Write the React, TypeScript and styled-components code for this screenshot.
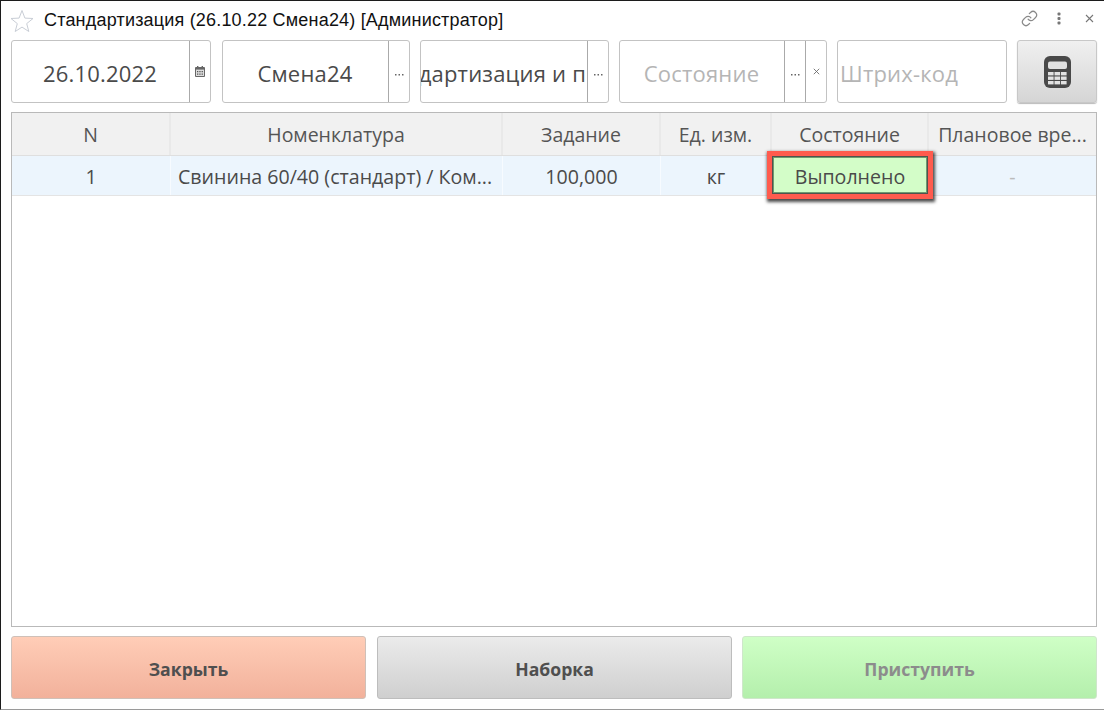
import React from "react";
import styled, { createGlobalStyle } from "styled-components";

const Global = createGlobalStyle`
  html, body { margin: 0; padding: 0; background: #fff; }
  * { box-sizing: border-box; }
`;

const Window = styled.div`
  width: 1104px;
  height: 710px;
  display: flex;
  flex-direction: column;
  background: #fff;
  border-top: 1px solid #1c1c1c;
  border-left: 1px solid #1c1c1c;
  border-bottom: 1px solid #9a9a9a;
  font-family: "Open Sans", sans-serif;
  color: #4a4a4a;
  overflow: hidden;
`;

const TitleBar = styled.div`
  height: 39px;
  flex: none;
  display: flex;
  align-items: center;
  padding: 0 0 0 9px;
`;

const Title = styled.div`
  flex: 1;
  margin-left: 10px;
  font: 18px "Liberation Sans", sans-serif;
  letter-spacing: 0.19px;
  color: #111;
  white-space: nowrap;
`;

const TitleIcons = styled.div`
  display: flex;
  align-items: center;
  margin-bottom: 4px;
`;

const IconSlot = styled.div`
  width: 30px;
  display: flex;
  align-items: center;
  justify-content: center;
`;

const Toolbar = styled.div`
  display: flex;
  flex: none;
  height: 63px;
  margin-left: 10px;
`;

const Field = styled.div<{ $w: number; $gap: number }>`
  width: ${(p) => p.$w}px;
  margin-right: ${(p) => p.$gap}px;
  flex: none;
  display: flex;
  border: 1px solid #c3c3c3;
  border-radius: 3px;
  background: #fff;
`;

const FieldValue = styled.div<{ $muted?: boolean; $align?: string }>`
  flex: 1;
  min-width: 0;
  display: flex;
  align-items: center;
  justify-content: ${(p) => p.$align || "center"};
  overflow: hidden;
  white-space: nowrap;
  padding: 2px ${(p) => (p.$align === "flex-start" ? 0 : 1)}px 0 ${(p) => (p.$align === "flex-start" ? 2 : 0)}px;
  font-size: 22px;
  letter-spacing: 0.2px;
  color: ${(p) => (p.$muted ? "#b5b5b5" : "#4a4a4a")};
`;

const FieldButton = styled.div<{ $w: number; $low?: boolean }>`
  width: ${(p) => p.$w}px;
  flex: none;
  display: flex;
  align-items: center;
  justify-content: center;
  padding-top: ${(p) => (p.$low ? 6 : 0)}px;
  border-left: 1px solid #aaa;
  color: #555;
  font-size: 11px;
`;

const IconButton = styled.div`
  width: 80px;
  flex: none;
  display: flex;
  align-items: center;
  justify-content: center;
  border: 1px solid #c8c8c8;
  border-radius: 3px;
  background: linear-gradient(#f0f0f0, #d5d5d5);
  box-shadow: 0 1px 1px #bbb;
`;

const Table = styled.div`
  flex: 1;
  margin: 9px 7px 9px 10px;
  border: 1px solid #b9b9b9;
  min-height: 0;
`;

const Row = styled.div<{ $h: number; $bg: string; $line: string }>`
  display: grid;
  grid-template-columns: 159px 332px 158px 111px 157px 1fr;
  height: ${(p) => p.$h}px;
  background: ${(p) => p.$bg};
  border-bottom: 1px solid ${(p) => p.$line};
`;

const HeadCell = styled.div`
  display: flex;
  align-items: center;
  justify-content: center;
  padding: 0 7px;
  font-size: 19.5px;
  color: #555;
  white-space: nowrap;
  overflow: hidden;
  border-right: 2px solid #e9e9e9;
  &:last-child { border-right: 0; }
`;

const Cell = styled.div<{ $left?: boolean; $muted?: boolean }>`
  position: relative;
  display: flex;
  align-items: center;
  justify-content: ${(p) => (p.$left ? "flex-start" : "center")};
  padding: 1px 7px 0;
  font-size: 19.6px;
  color: ${(p) => (p.$muted ? "#bbb" : "#4a4a4a")};
  white-space: nowrap;
  border-right: 1px solid #f7fbff;
  &:last-child { border-right: 0; }
`;

const StatusCell = styled(Cell)`
  background: #d3fdc8;
  overflow: visible;
`;

const Highlight = styled.div`
  position: absolute;
  left: -5px;
  right: -5px;
  top: -5px;
  bottom: -4px;
  border: 5px solid #ff5b4e;
  box-shadow: inset 0 0 0 1px #4e544e, inset 0 0 0 2px #6f9a70, 1px 2px 3px 1px rgba(30, 30, 30, 0.8);
  pointer-events: none;
`;

const Footer = styled.div`
  display: flex;
  flex: none;
  gap: 10px;
  height: 63px;
  margin: 0 7px 10px 10px;
`;

const ActionButton = styled.div<{ $from: string; $to: string; $line: string; $color: string; $shift?: boolean }>`
  flex: 1;
  display: flex;
  align-items: center;
  justify-content: center;
  margin-left: ${(p) => (p.$shift ? 1 : 0)}px;
  padding-top: 2px;
  font-size: 17.6px;
  font-weight: 700;
  color: ${(p) => p.$color};
  background: linear-gradient(${(p) => p.$from} 0%, ${(p) => p.$to} 100%);
  border: 1px solid ${(p) => p.$line};
  border-radius: 3px;
`;

const Star = () => (
  <svg width="24" height="24" viewBox="0 0 24 24" fill="#fff" stroke="#c9ced6" strokeWidth="1" strokeLinejoin="miter">
    <path d="M12 1.5l2.9 7.6 8.1.4-6.3 5.1 2.1 7.9L12 18.1l-6.8 4.4 2.1-7.9L1 9.5l8.1-.4z" />
  </svg>
);

const LinkIcon = () => (
  <svg width="17" height="17" viewBox="0 0 24 24" fill="none" stroke="#8a8a8a" strokeWidth="1.7" strokeLinecap="round" strokeLinejoin="round">
    <path d="M10 13a5 5 0 0 0 7.54.54l3-3a5 5 0 0 0-7.07-7.07l-1.72 1.71" />
    <path d="M14 11a5 5 0 0 0-7.54-.54l-3 3a5 5 0 0 0 7.07 7.07l1.71-1.71" />
  </svg>
);

const Kebab = () => (
  <svg width="4" height="13" viewBox="0 0 4 13" fill="#777">
    <rect x="0.5" y="0.5" width="3" height="3" rx="1" />
    <rect x="0.5" y="5" width="3" height="3" rx="1" />
    <rect x="0.5" y="9.5" width="3" height="3" rx="1" />
  </svg>
);

const Cross = ({ size = 9, color = "#777" }: { size?: number; color?: string }) => (
  <svg width={size} height={size} viewBox="0 0 9 9" stroke={color} strokeWidth="1.1" fill="none">
    <path d="M1 1l7 7M8 1L1 8" />
  </svg>
);

const Dots = () => (
  <svg width="9" height="2" viewBox="0 0 9 2" fill="#666">
    <rect x="0" y="0" width="1.5" height="1.5" />
    <rect x="3.5" y="0" width="1.5" height="1.5" />
    <rect x="7" y="0" width="1.5" height="1.5" />
  </svg>
);

const CalendarSmall = () => (
  <svg width="10" height="11" viewBox="0 0 10 11">
    <rect x="0" y="1" width="10" height="10" rx="1" fill="#666" />
    <rect x="2" y="0" width="1.4" height="2.4" fill="#666" />
    <rect x="6.6" y="0" width="1.4" height="2.4" fill="#666" />
    <rect x="1" y="3.6" width="8" height="6.4" fill="#ddd" />
    <path d="M2 5h1.3v1.3H2zM4.3 5h1.3v1.3H4.3zM6.6 5h1.3v1.3H6.6zM2 7.5h1.3v1.3H2zM4.3 7.5h1.3v1.3H4.3zM6.6 7.5h1.3v1.3H6.6z" fill="#555" />
  </svg>
);

const Calculator = () => (
  <svg width="27" height="32" viewBox="0 0 27 32">
    <rect x="0" y="0" width="27" height="32" rx="6" fill="#494949" />
    <rect x="4" y="5.5" width="19" height="7.5" rx="2" fill="#e2e2e2" />
    {[4, 10.5, 17].map((x) =>
      [16, 20.5, 25].map((y) => <rect key={`${x}-${y}`} x={x} y={y} width="5.6" height="3.4" fill="#e2e2e2" />)
    )}
  </svg>
);

export default function App() {
  return (
    <Window>
      <Global />
      <TitleBar>
        <Star />
        <Title>Стандартизация (26.10.22 Смена24) [Администратор]</Title>
        <TitleIcons>
          <IconSlot><LinkIcon /></IconSlot>
          <IconSlot><Kebab /></IconSlot>
          <IconSlot><Cross /></IconSlot>
        </TitleIcons>
      </TitleBar>
      <Toolbar>
        <Field $w={200} $gap={11}>
          <FieldValue>26.10.2022</FieldValue>
          <FieldButton $w={21}><CalendarSmall /></FieldButton>
        </Field>
        <Field $w={188} $gap={10}>
          <FieldValue>Смена24</FieldValue>
          <FieldButton $w={21} $low><Dots /></FieldButton>
        </Field>
        <Field $w={189} $gap={10}>
          <FieldValue $align="flex-end">Стандартизация и п</FieldValue>
          <FieldButton $w={21} $low><Dots /></FieldButton>
        </Field>
        <Field $w={208} $gap={10}>
          <FieldValue $muted>Состояние</FieldValue>
          <FieldButton $w={21} $low><Dots /></FieldButton>
          <FieldButton $w={21}><Cross size={7} color="#666" /></FieldButton>
        </Field>
        <Field $w={170} $gap={10}>
          <FieldValue $muted $align="flex-start">Штрих-код</FieldValue>
        </Field>
        <IconButton><Calculator /></IconButton>
      </Toolbar>
      <Table>
        <Row $h={43} $bg="#f1f1f1" $line="#dfdfdf">
          <HeadCell>N</HeadCell>
          <HeadCell>Номенклатура</HeadCell>
          <HeadCell>Задание</HeadCell>
          <HeadCell>Ед. изм.</HeadCell>
          <HeadCell>Состояние</HeadCell>
          <HeadCell>Плановое вре...</HeadCell>
        </Row>
        <Row $h={40} $bg="#ecf5fd" $line="#e4e4e4">
          <Cell>1</Cell>
          <Cell $left>Свинина 60/40 (стандарт) / Ком...</Cell>
          <Cell>100,000</Cell>
          <Cell>кг</Cell>
          <StatusCell>
            Выполнено
            <Highlight />
          </StatusCell>
          <Cell $muted>-</Cell>
        </Row>
      </Table>
      <Footer>
        <ActionButton $from="#ffcdb7" $to="#f2b19b" $line="#cfc0b8" $color="#4f4f4f">Закрыть</ActionButton>
        <ActionButton $shift $from="#ebebeb" $to="#cfcfcf" $line="#bdbdbd" $color="#4f4f4f">Наборка</ActionButton>
        <ActionButton $from="#cfffc6" $to="#b4efac" $line="#cfe6cb" $color="#8c8c8c">Приступить</ActionButton>
      </Footer>
    </Window>
  );
}
